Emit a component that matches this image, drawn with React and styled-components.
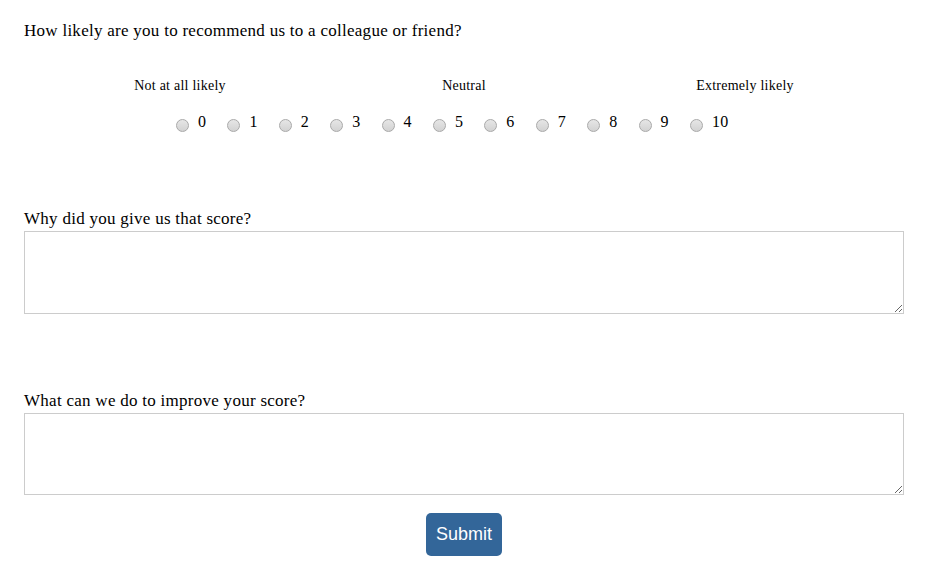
import React from "react";
import styled, { createGlobalStyle } from "styled-components";

const Global = createGlobalStyle`
  html, body { margin: 0; padding: 0; background: #fff; }
  body { font-family: "Liberation Serif", "Times New Roman", serif; color: #000; }
`;

const Page = styled.form`
  width: 880px;
  padding: 22px 24px 0 24px;
  display: flex;
  flex-direction: column;
`;

const Question = styled.div`
  font-size: 17px;
  letter-spacing: 0.27px;
  line-height: 18px;
  margin-top: ${(p) => p.$mt || 0}px;
`;

const ScaleLabels = styled.div`
  display: grid;
  grid-template-columns: 284px 284px 278px;
  margin-top: 38px;
  padding-left: 14px;
  font-size: 14px;
  letter-spacing: 0.25px;
  line-height: 16px;
  text-align: center;
`;

const RadioRow = styled.div`
  display: flex;
  margin-top: 19px;
  padding-left: 152px;
`;

const Option = styled.label`
  width: 51.4px;
  flex: none;
  display: flex;
  align-items: flex-start;
  gap: 9px;
  font-size: 16px;
  letter-spacing: 0.3px;
  line-height: 18px;
`;

const Radio = styled.span`
  width: 13px;
  height: 13px;
  box-sizing: border-box;
  margin-top: 6px;
  border-radius: 50%;
  border: 1px solid #a9a9a9;
  background: linear-gradient(#e6e6e6, #d2d2d2);
  flex: none;
`;

const TextArea = styled.textarea`
  display: block;
  box-sizing: border-box;
  width: 880px;
  height: ${(p) => p.$h}px;
  margin: ${(p) => p.$mt}px 0 0 0;
  border: 1px solid #cccccc;
  padding: 2px;
  font-family: inherit;
  outline: none;
`;

const SubmitButton = styled.button`
  align-self: center;
  margin-top: 18px;
  width: 76px;
  height: 43px;
  border: none;
  border-radius: 5px;
  background: #336699;
  color: #fff;
  font-family: "Liberation Sans", Arial, sans-serif;
  font-size: 18px;
  padding: 0;
  cursor: pointer;
`;

export default function App() {
  const opts = Array.from({ length: 11 }, (_, i) => i);
  return (
    <>
      <Global />
      <Page onSubmit={(e) => e.preventDefault()}>
        <Question>How likely are you to recommend us to a colleague or friend?</Question>
        <ScaleLabels>
          <span>Not at all likely</span>
          <span>Neutral</span>
          <span>Extremely likely</span>
        </ScaleLabels>
        <RadioRow>
          {opts.map((n) => (
            <Option key={n}>
              <Radio />
              {n}
            </Option>
          ))}
        </RadioRow>
        <Question $mt={78}>Why did you give us that score?</Question>
        <TextArea $h={83} $mt={3} />
        <Question $mt={78}>What can we do to improve your score?</Question>
        <TextArea $h={82} $mt={3} />
        <SubmitButton type="submit">Submit</SubmitButton>
      </Page>
    </>
  );
}
